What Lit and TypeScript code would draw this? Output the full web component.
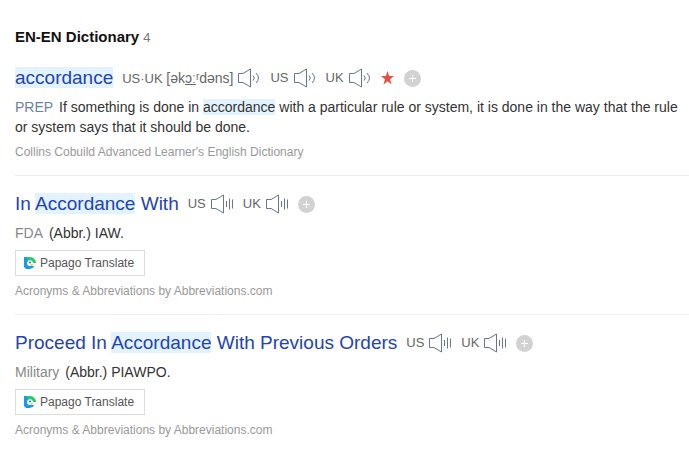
import { LitElement, html, css, svg, nothing } from "lit";
import { customElement, property } from "lit/decorators.js";

type SoundKind = "human" | "synth";

interface Entry {
  title: string;
  pron?: boolean;
  sound: SoundKind;
  starred?: boolean;
  label: string;
  labelTone: "part" | "field";
  text: string;
  translate?: boolean;
  source: string;
}

const ENTRIES: Entry[] = [
  {
    title: "accordance",
    pron: true,
    sound: "human",
    starred: true,
    label: "PREP",
    labelTone: "part",
    text: "If something is done in accordance with a particular rule or system, it is done in the way that the rule or system says that it should be done.",
    source: "Collins Cobuild Advanced Learner's English Dictionary",
  },
  {
    title: "In Accordance With",
    sound: "synth",
    label: "FDA",
    labelTone: "field",
    text: "(Abbr.) IAW.",
    translate: true,
    source: "Acronyms & Abbreviations by Abbreviations.com",
  },
  {
    title: "Proceed In Accordance With Previous Orders",
    sound: "synth",
    label: "Military",
    labelTone: "field",
    text: "(Abbr.) PIAWPO.",
    translate: true,
    source: "Acronyms & Abbreviations by Abbreviations.com",
  },
];

const highlight = (text: string) =>
  text
    .split(/(accordance)/i)
    .map((part) => (/^accordance$/i.test(part) ? html`<mark>${part}</mark>` : part));

const WAVES = {
  human: svg`<path d="M15 7.5q2.600 2.500 0 5M18 5q5 5 0 10" />`,
  synth: svg`<path d="M15.5 7v6M18.5 4.5v11M21.5 5.5v9" />`,
};

@customElement("sound-button")
export class SoundButton extends LitElement {
  @property() kind: SoundKind = "human";
  @property() label = "";

  static styles = css`
    :host {
      display: inline-flex;
    }
    button {
      display: flex;
      padding: 0;
      border: 0;
      background: none;
      cursor: pointer;
    }
    svg {
      width: 23px;
      height: 20px;
      fill: none;
      stroke: #66778f;
    }
  `;

  render() {
    return html`<button type="button" aria-label=${this.label}>
      <svg viewBox="0 0 23 20">
        <path d="M.5 5.5h4.500L12.500 1v18L5 14.500H.5z" />
        ${WAVES[this.kind]}
      </svg>
    </button>`;
  }
}

@customElement("dictionary-entry")
export class DictionaryEntry extends LitElement {
  @property({ attribute: false }) entry!: Entry;

  static styles = css`
    :host {
      display: block;
      padding-bottom: 14px;
    }
    .head {
      display: flex;
      flex-wrap: wrap;
      align-items: center;
      column-gap: 9px;
      min-height: 24px;
    }
    .title {
      color: #1f43b4;
      font-size: 19px;
      line-height: 24px;
      text-decoration: none;
    }
    mark {
      background: #e3f3fe;
      color: inherit;
    }
    .voice {
      display: inline-flex;
      align-items: center;
      gap: 5px;
      color: #666;
      font-size: 13px;
      line-height: 20px;
    }
    .ipa {
      font-size: 14px;
    }
    .star {
      width: 14px;
      height: 14px;
      fill: #e4503f;
    }
    .add {
      display: flex;
      padding: 0;
      border: 0;
      background: none;
      cursor: pointer;
    }
    .add svg {
      width: 17px;
      height: 17px;
    }
    .meaning {
      margin: 7px 0 0;
      color: #333;
      font-size: 14px;
      line-height: 20px;
    }
    .label {
      margin-right: 2px;
    }
    .part {
      color: #6b82a3;
    }
    .field {
      color: #888;
    }
    .translate {
      display: flex;
      align-items: center;
      gap: 4px;
      height: 26px;
      margin-top: 7px;
      padding: 0 10px 0 8px;
      border: 1px solid #ddd;
      background: #fff;
      color: #555;
      font: inherit;
      font-size: 12px;
      cursor: pointer;
    }
    .translate svg {
      width: 12px;
      height: 12px;
    }
    .source {
      margin: 6px 0 0;
      color: #999;
      font-size: 12px;
      line-height: 18px;
    }
  `;

  private voice(name: unknown, label: string) {
    return html`<span class="voice">
      <span>${name}</span>
      <sound-button kind=${this.entry.sound} label=${`Listen: ${label}`}></sound-button>
    </span>`;
  }

  render() {
    const e = this.entry;
    return html`
      <div class="head">
        <a class="title" href="#">${highlight(e.title)}</a>
        ${e.pron
          ? this.voice(html`US·UK <span class="ipa">[ək<u>ɔː</u>ʳdəns]</span>`, "US and UK")
          : nothing}
        ${this.voice("US", "US")} ${this.voice("UK", "UK")}
        ${e.starred
          ? html`<svg class="star" viewBox="0 0 14 14" aria-hidden="true">
              <path d="M6.500 0l1.600 5H13L9 8.200 10.600 13.500 6.500 10.300 2.400 13.500 4 8.200 0 5h4.900z" />
            </svg>`
          : nothing}
        <button class="add" type="button" aria-label="Add to wordbook">
          <svg viewBox="0 0 17 17">
            <circle cx="8.500" cy="8.500" r="8.500" fill="#d2d2d2" />
            <path d="M8.500 5v7M5 8.500h7" stroke="#fff" />
          </svg>
        </button>
      </div>
      <p class="meaning"><span class="label ${e.labelTone}">${e.label}</span> ${highlight(e.text)}</p>
      ${e.translate
        ? html`<button class="translate" type="button">
            <svg viewBox="0 0 12 12" aria-hidden="true">
              <path d="M0 0h6v12H2L0 10z" fill="#189be8" />
              <path d="M2 0h4a6 6 0 0 1 6 6H6z" fill="#25c96c" />
              <path d="M5 12a6 6 0 0 0 5.500-3H5z" fill="#189be8" />
              <path d="M6 3.200a3 3 0 0 1 3 2.800h3L9.500 9H6a2.900 2.900 0 0 1 0-5.800z" fill="#fff" />
              <circle cx="6" cy="5.500" r="1" fill="#1673c8" />
              <path d="M6.500 7h3L8 9H6.500z" fill="#ffc93c" />
            </svg>
            Papago Translate
          </button>`
        : nothing}
      <p class="source">${e.source}</p>
    `;
  }
}

@customElement("app-root")
export class AppRoot extends LitElement {
  static styles = css`
    :host {
      display: block;
      padding: 26px 0 12px 15px;
      background: #fff;
      font-family: "Liberation Sans", Arial, sans-serif;
    }
    .heading {
      display: flex;
      align-items: baseline;
      gap: 4px;
      margin: 0 0 17px;
      color: #111;
      font-size: 15px;
      line-height: 22px;
    }
    .count {
      color: #777;
      font-size: 13px;
      font-weight: 400;
    }
    dictionary-entry + dictionary-entry {
      padding-top: 16px;
      border-top: 1px solid #eee;
    }
  `;

  render() {
    return html`
      <h2 class="heading">EN-EN Dictionary <span class="count">4</span></h2>
      ${ENTRIES.map((entry) => html`<dictionary-entry .entry=${entry}></dictionary-entry>`)}
    `;
  }
}
